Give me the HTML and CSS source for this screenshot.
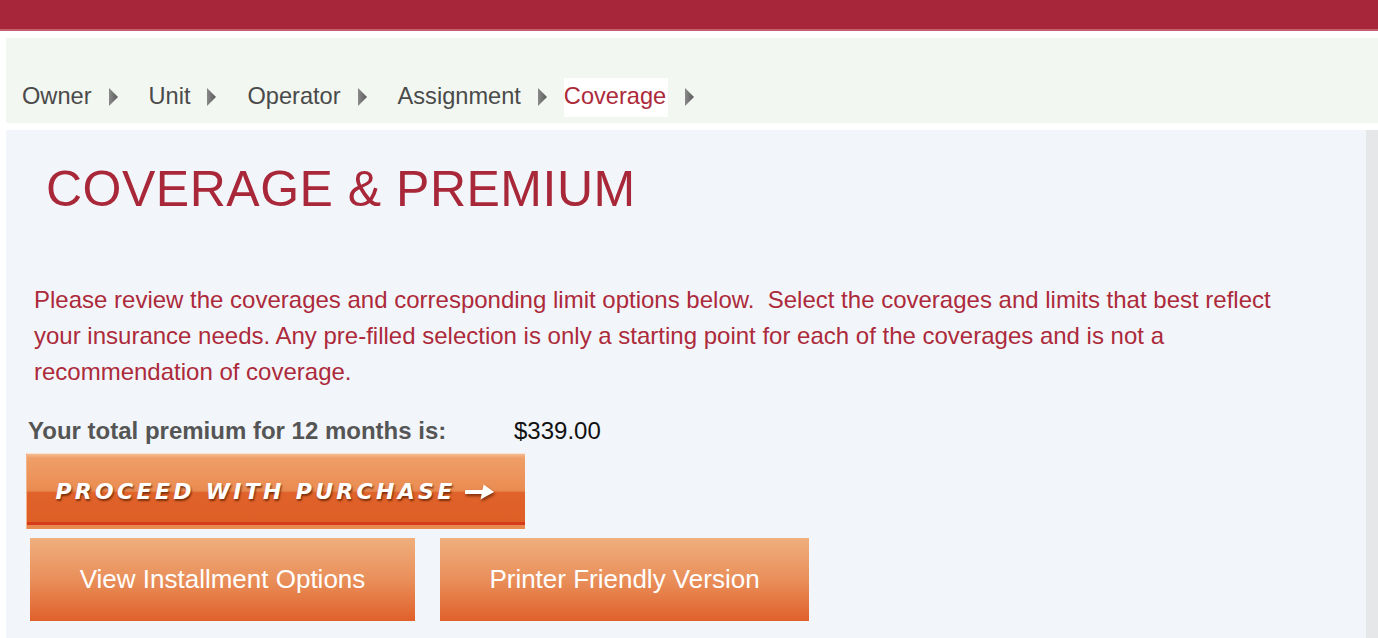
FILE: index.html
```html
<!DOCTYPE html>
<html lang="en">
<head>
<meta charset="utf-8">
<title>Coverage &amp; Premium</title>
<link rel="stylesheet" href="styles.css">
</head>
<body>
<div class="topbar"></div>
<nav class="crumbs">
  <span class="crumb">Owner</span>
  <svg class="sep" width="11" height="18" viewBox="0 0 11 18"><defs><linearGradient id="g1" x1="0" y1="0" x2="1" y2="0"><stop offset="0" stop-color="#8a8a8a"/><stop offset="1" stop-color="#5a5a5a"/></linearGradient></defs><polygon points="1,0 10,9 1,18" fill="url(#g1)"/></svg>
  <span class="crumb">Unit</span>
  <svg class="sep" width="11" height="18" viewBox="0 0 11 18"><polygon points="1,0 10,9 1,18" fill="url(#g1)"/></svg>
  <span class="crumb">Operator</span>
  <svg class="sep" width="11" height="18" viewBox="0 0 11 18"><polygon points="1,0 10,9 1,18" fill="url(#g1)"/></svg>
  <span class="crumb">Assignment</span>
  <svg class="sep sep-before-active" width="11" height="18" viewBox="0 0 11 18"><polygon points="1,0 10,9 1,18" fill="url(#g1)"/></svg>
  <span class="crumb active">Coverage</span>
  <svg class="sep sep-after-active" width="11" height="18" viewBox="0 0 11 18"><polygon points="1,0 10,9 1,18" fill="url(#g1)"/></svg>
</nav>
<div class="page">
  <main class="panel">
    <h1 class="title">COVERAGE &amp; PREMIUM</h1>
    <p class="intro">Please review the coverages and corresponding limit options below.&nbsp; Select the coverages and limits that best reflect your insurance needs. Any pre-filled selection is only a starting point for each of the coverages and is not a recommendation of coverage.</p>
    <div class="total">
      <span class="total-label">Your total premium for 12 months is:</span>
      <span class="total-value">$339.00</span>
    </div>
    <button class="proceed" type="button">
      <span class="proceed-text">PROCEED WITH PURCHASE</span>
      <svg class="proceed-arrow" width="32" height="18" viewBox="0 0 32 18"><g transform="skewX(-12) translate(3,0)"><path d="M1 9 H22" stroke="#fff" stroke-width="4.2" stroke-linecap="square"/><polygon points="16,1.5 28,9 16,16.5" fill="#fff"/></g></svg>
    </button>
    <div class="actions">
      <button class="action action-wide" type="button">View Installment Options</button>
      <button class="action action-narrow" type="button">Printer Friendly Version</button>
    </div>
  </main>
  <div class="rail"></div>
</div>
</body>
</html>
```
FILE: styles.css
```css
html, body {
  margin: 0;
  padding: 0;
  background: #ffffff;
  height: 100%;
}
body {
  font-family: "Liberation Sans", Arial, sans-serif;
  overflow: hidden;
}
.topbar {
  height: 29px;
  background: #a8263a;
  border-bottom: 2px solid #c2606e;
}
.crumbs {
  margin: 7px 0 0 6px;
  height: 39px;
  padding: 40px 0 6px 16px;
  background: #f2f7f1;
  display: flex;
  align-items: center;
}
.crumb {
  font-size: 23.6px;
  line-height: 36px;
  padding-bottom: 3px;
  color: #4a4a4a;
}
.crumb.active {
  color: #ad2a3b;
  background: #ffffff;
  padding-right: 2px;
  margin-left: -14px;
}
.sep {
  margin: -2px 30px 0 16px;
  flex: none;
}
.sep-after-active {
  margin-left: 16px;
}
.page {
  display: flex;
  margin: 7px 0 0 6px;
  height: 520px;
}
.panel {
  flex: 1;
  background: #f2f6fa;
  display: flex;
  flex-direction: column;
  align-items: flex-start;
}
.rail {
  width: 12px;
  background: #e6e7e9;
}
.title {
  margin: 34px 0 0 40px;
  font-size: 50px;
  line-height: 50px;
  font-weight: normal;
  color: #a8283a;
  letter-spacing: 0.5px;
}
.intro {
  margin: 68px 0 0 28px;
  max-width: 1290px;
  font-size: 24px;
  line-height: 36px;
  color: #ad2a3b;
}
.total {
  margin: 26px 0 0 22px;
  display: flex;
  font-size: 24px;
  line-height: 30px;
}
.total-label {
  width: 486px;
  font-weight: bold;
  color: #555555;
}
.total-value {
  color: #111111;
}
.proceed {
  margin: 7px 0 0 20px;
  width: 499px;
  height: 76px;
  padding: 0;
  border: 0;
  border-left: 1px solid #f3b58a;
  border-top: 1px solid #fbe3d2;
  background: linear-gradient(to bottom,
    #f4bb93 0px, #ef9f68 4px, #ea8c52 36px, #e37a40 38px,
    #e0632b 38px, #de5e26 68px, #d63c1c 68px, #d63c1c 71px,
    #e8884f 71px, #ea8c52 76px);
  display: flex;
  align-items: center;
  justify-content: center;
  cursor: pointer;
}
.proceed-text {
  font-family: "DejaVu Sans", sans-serif;
  font-weight: bold;
  font-style: italic;
  font-size: 22px;
  letter-spacing: 3.3px;
  color: #ffffff;
  text-shadow: 1px 2px 2px rgba(90, 30, 0, 0.75);
}
.proceed-arrow {
  margin-left: 9px;
  filter: drop-shadow(1px 2px 1.5px rgba(90, 30, 0, 0.75));
}
.actions {
  margin: 9px 0 0 24px;
  display: flex;
  gap: 25px;
}
.action {
  height: 83px;
  padding: 0;
  border: 0;
  background: linear-gradient(to bottom, #f0af7e 0%, #e98f5a 50%, #e0602a 100%);
  color: #ffffff;
  font-family: "Liberation Sans", Arial, sans-serif;
  font-size: 26px;
  cursor: pointer;
}
.action-wide {
  width: 385px;
}
.action-narrow {
  width: 369px;
}
```
